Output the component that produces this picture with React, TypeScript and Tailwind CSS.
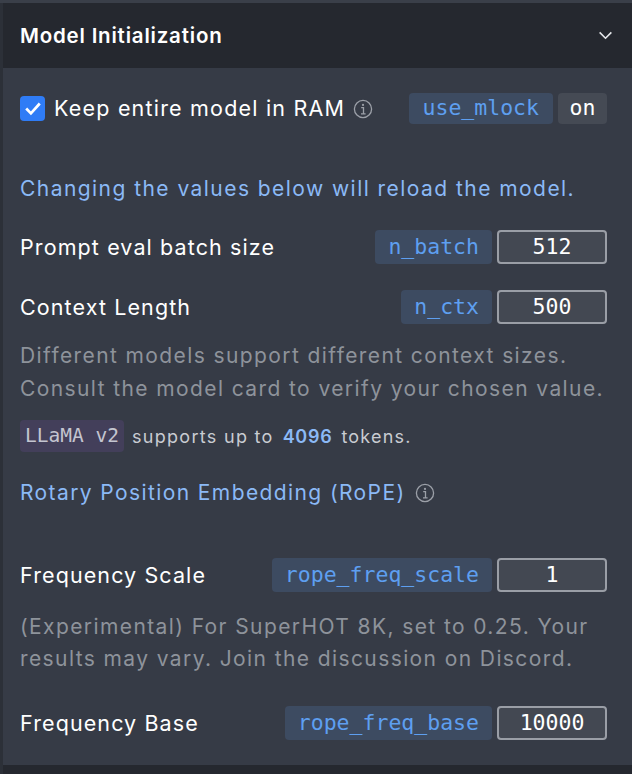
import React from "react";

const sans = { fontFamily: "Inter, 'Noto Sans', sans-serif" };
const mono = { fontFamily: "'DejaVu Sans Mono', 'Liberation Mono', monospace" };

function Info({ className = "" }: { className?: string }) {
  return (
    <svg viewBox="0 0 20 20" className={className} fill="none">
      <circle cx="10" cy="10" r="8.6" stroke="#9ca0a8" strokeWidth="1.3" />
      <circle cx="10" cy="5.9" r="1.1" fill="#9ca0a8" />
      <path d="M8.2 8.6h2.3v6.2M8 14.8h4.6" stroke="#9ca0a8" strokeWidth="1.3" />
    </svg>
  );
}

function Row({ label, param, value, className = "" }: { label: string; param: string; value: string; className?: string }) {
  return (
    <div className={"flex items-center h-[34px] " + className}>
      <span className="flex-1 text-[21.5px] tracking-[1.1px] text-white">{label}</span>
      <span
        className="h-[34px] flex items-center px-[13px] rounded-[4px] bg-[#3d4b61] text-[#5e9ff0] text-[21.5px]"
        style={mono}
      >
        {param}
      </span>
      <span
        className="ml-[5px] w-[110px] h-[34px] flex items-center justify-center rounded-[4px] border-2 border-[#9a9ea6] bg-[#434852] text-white text-[21.5px]"
        style={mono}
      >
        {value}
      </span>
    </div>
  );
}

export default function App() {
  return (
    <div className="w-[632px] h-[774px] bg-[#383d47] overflow-hidden" style={sans}>
      <div className="h-[3px] bg-[#3a3f49]" />
      <div className="flex h-[771px]">
        <div className="w-[3px] bg-[#2c3038]" />
        <div className="flex-1 flex flex-col">
          <div className="h-[65px] bg-[#25282f] flex items-center pl-[17px] pr-[19px]">
            <span className="flex-1 mt-[2px] text-[20.5px] tracking-[0.8px] font-semibold text-white">Model Initialization</span>
            <svg viewBox="0 0 16 10" className="w-[15px] h-[9px]" fill="none">
              <path d="M1.5 1.5 8 8l6.5-6.5" stroke="#e5e7eb" strokeWidth="1.8" />
            </svg>
          </div>
          <div className="flex-1 bg-[#363b46] pl-[17px] pr-[25px] flex flex-col">
            <div className="mt-[25px] flex items-center h-[31px]">
              <span className="w-[25px] h-[25px] rounded-[4px] bg-[#2f7cf6] flex items-center justify-center">
                <svg viewBox="0 0 20 20" className="w-[18px] h-[18px]" fill="none">
                  <path d="M3.5 10.5l4.2 4.3L16.5 5" stroke="white" strokeWidth="3" strokeLinecap="square" />
                </svg>
              </span>
              <span className="ml-[9px] text-[21.5px] tracking-[1.2px] text-white">Keep entire model in RAM</span>
              <Info className="ml-[8px] w-[20px] h-[20px]" />
              <span className="flex-1" />
              <span
                className="h-[31px] flex items-center px-[14px] rounded-[4px] bg-[#3d4b61] text-[#5e9ff0] text-[21.5px]"
                style={mono}
              >
                use_mlock
              </span>
              <span
                className="ml-[5px] h-[31px] w-[49px] flex items-center justify-center rounded-[4px] bg-[#454a54] text-white text-[21.5px]"
                style={mono}
              >
                on
              </span>
            </div>
            <div className="mt-[49px] h-[32px] leading-[32px] text-[21px] tracking-[1.45px] text-[#8bb9f6] whitespace-nowrap">
              Changing the values below will reload the model.
            </div>
            <Row className="mt-[25px]" label="Prompt eval batch size" param="n_batch" value="512" />
            <Row className="mt-[26px]" label="Context Length" param="n_ctx" value="500" />
            <div className="mt-[15px] text-[21px] tracking-[1.4px] leading-[33px] text-[#8e939b] whitespace-nowrap">
              Different models support different context sizes.
              <br />
              Consult the model card to verify your chosen value.
            </div>
            <div className="mt-[15px] flex items-center h-[32px]">
              <span
                className="h-[32px] flex items-center px-[5px] rounded-[4px] bg-[#433f5a] text-[#c4c5d0] text-[19.5px]"
                style={mono}
              >
                LLaMA v2
              </span>
              <span className="ml-[8px] text-[18px] tracking-[1.3px] text-[#c9ccd2]">supports up to</span>
              <span className="ml-[9px] text-[18px] tracking-[0.7px] font-semibold text-[#8bb9f6]">4096</span>
              <span className="ml-[9px] text-[18px] tracking-[1.2px] text-[#c9ccd2]">tokens.</span>
            </div>
            <div className="mt-[25px] h-[32px] flex items-center">
              <span className="text-[21px] tracking-[1.4px] text-[#8bb9f6]">Rotary Position Embedding (RoPE)</span>
              <Info className="ml-[9px] w-[20px] h-[20px]" />
            </div>
            <Row className="mt-[49px]" label="Frequency Scale" param="rope_freq_scale" value="1" />
            <div className="mt-[19px] text-[21px] tracking-[1.4px] leading-[32px] text-[#8e939b] whitespace-nowrap">
              (Experimental) For SuperHOT 8K, set to 0.25. Your
              <br />
              results may vary. Join the discussion on Discord.
            </div>
            <Row className="mt-[31px]" label="Frequency Base" param="rope_freq_base" value="10000" />
          </div>
          <div className="h-[9px] bg-[#25282f]" />
        </div>
      </div>
    </div>
  );
}
